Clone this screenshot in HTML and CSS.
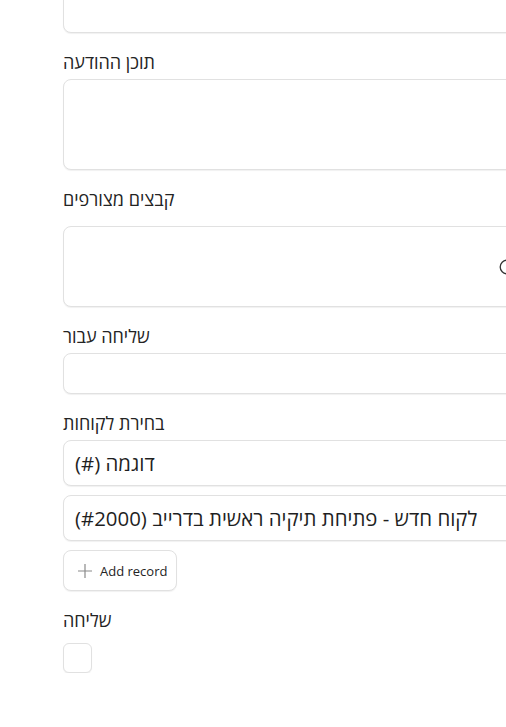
FILE: index.html
```html
<!DOCTYPE html>
<html lang="he">
<head>
<meta charset="utf-8">
<title>Form</title>
<link rel="stylesheet" href="styles.css">
</head>
<body>
<div class="form">
  <div class="field field-top">
    <div class="box box-area"></div>
  </div>

  <div class="field">
    <div class="label">תוכן ההודעה</div>
    <div class="box box-area"></div>
  </div>

  <div class="field field-files">
    <div class="label">קבצים מצורפים</div>
    <div class="box box-files">
      <svg class="upload-icon" width="16" height="16" viewBox="0 0 16 16" aria-hidden="true">
        <circle cx="8" cy="8" r="6.8" fill="none" stroke="#333" stroke-width="1.3"/>
      </svg>
    </div>
  </div>

  <div class="field">
    <div class="label">שליחה עבור</div>
    <div class="box box-input"></div>
  </div>

  <div class="field">
    <div class="label">בחירת לקוחות</div>
    <div class="records">
      <div class="box record"><span dir="rtl">דוגמה (#)</span></div>
      <div class="box record"><span dir="rtl">לקוח חדש - פתיחת תיקיה ראשית בדרייב (#2000)</span></div>
      <button class="add-btn" type="button">
        <svg width="16" height="16" viewBox="0 0 16 16" aria-hidden="true">
          <path d="M8 1v14M1 8h14" stroke="#8a8a8a" stroke-width="1.2" fill="none"/>
        </svg>
        <span>Add record</span>
      </button>
    </div>
  </div>

  <div class="field field-check">
    <div class="label">שליחה</div>
    <div class="checkbox"></div>
  </div>
</div>
</body>
</html>
```

FILE: styles.css
```css
html, body {
  margin: 0;
  padding: 0;
  overflow: hidden;
  background: #ffffff;
}

body {
  font-family: "Open Sans", "DejaVu Sans", sans-serif;
  color: #242424;
}

.form {
  padding-left: 63px;
  width: 470px;
  display: flex;
  flex-direction: column;
  gap: 19px;
}

.field {
  display: flex;
  flex-direction: column;
}

.field-top {
  margin-top: -58px;
}

.label {
  font-size: 18px;
  line-height: 20px;
  height: 20px;
  margin-bottom: 7px;
  color: #242424;
}

.box {
  box-sizing: border-box;
  background: #fff;
  border: 1px solid #e1e1e1;
  border-radius: 8px;
  box-shadow: 0 1px 1px rgba(0, 0, 0, 0.06);
}

.box-area {
  height: 91px;
}

.field-files .box-files {
  margin-top: 10px;
  height: 81px;
  display: flex;
  align-items: center;
  justify-content: flex-end;
  padding-right: 17px;
}

.upload-icon {
  display: block;
}

.box-input {
  height: 41px;
}

.records {
  display: flex;
  flex-direction: column;
  gap: 9px;
  align-items: flex-start;
}

.record {
  width: 100%;
  height: 46px;
  display: flex;
  align-items: center;
  padding-left: 11px;
  font-size: 20.4px;
  color: #1f1f1f;
}

.add-btn {
  box-sizing: border-box;
  height: 41px;
  width: 114px;
  display: flex;
  align-items: center;
  gap: 7px;
  padding: 0 0 0 13px;
  background: #fff;
  border: 1px solid #e1e1e1;
  border-radius: 8px;
  box-shadow: 0 1px 1px rgba(0, 0, 0, 0.06);
  font-family: "Open Sans", "DejaVu Sans", sans-serif;
  font-size: 13px;
  color: #242424;
  cursor: pointer;
}

.add-btn svg {
  display: block;
}

.field-check .label {
  margin-bottom: 13px;
}

.checkbox {
  box-sizing: border-box;
  width: 29px;
  height: 30px;
  border: 1px solid #e1e1e1;
  border-radius: 6px;
  box-shadow: 0 1px 1px rgba(0, 0, 0, 0.06);
  background: #fff;
}
```
